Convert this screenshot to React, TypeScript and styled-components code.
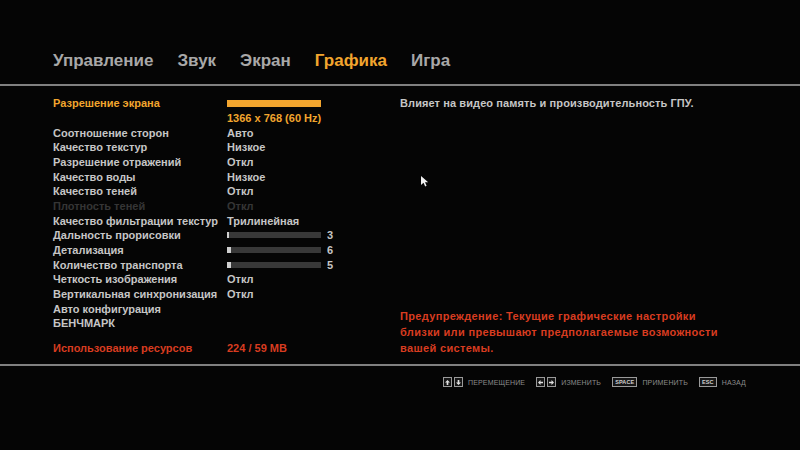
import styled, { createGlobalStyle } from "styled-components";

const GlobalStyle = createGlobalStyle`
  html, body {
    margin: 0;
    padding: 0;
    background: #050505;
  }
  body {
    font-family: "Liberation Sans", Arial, sans-serif;
  }
`;

const Screen = styled.div`
  position: relative;
  width: 800px;
  height: 450px;
  background: #050505;
  overflow: hidden;
  display: flex;
  flex-direction: column;
`;

const TabBar = styled.div`
  display: flex;
  gap: 24px;
  height: 84px;
  box-sizing: border-box;
  padding: 50px 0 0 53px;
`;

const Tab = styled.div<{ $active?: boolean }>`
  font-size: 17px;
  line-height: 22px;
  font-weight: bold;
  color: ${(p) => (p.$active ? "#f2a52e" : "#a8a8a8")};
`;

const Divider = styled.div`
  height: 2px;
  background: #808080;
`;

const Content = styled.div`
  display: grid;
  grid-template-columns: 347px 1fr;
  height: 278px;
  box-sizing: border-box;
  padding: 10px 0 8px 53px;
`;

const LeftColumn = styled.div`
  display: flex;
  flex-direction: column;
`;

const Row = styled.div<{ $tone?: "normal" | "active" | "disabled" | "alert" }>`
  display: grid;
  grid-template-columns: 174px 1fr;
  align-items: center;
  height: 14.67px;
  font-size: 11px;
  font-weight: bold;
  white-space: nowrap;
  color: ${(p) =>
    p.$tone === "active"
      ? "#f2a52e"
      : p.$tone === "disabled"
      ? "#353535"
      : p.$tone === "alert"
      ? "#d83c20"
      : "#c6c6c6"};
`;

const Spacer = styled.div`
  height: 10px;
`;

const ValueBar = styled.div`
  width: 94px;
  height: 7px;
  background: #f2a52e;
`;

const SliderCell = styled.div`
  display: flex;
  align-items: center;
  gap: 6px;
`;

const Track = styled.div`
  width: 94px;
  height: 6px;
  background: #383838;
`;

const Knob = styled.div`
  height: 100%;
  background: #cfcfcf;
`;

const RightColumn = styled.div`
  display: flex;
  flex-direction: column;
  justify-content: space-between;
`;

const Description = styled.div`
  font-size: 11px;
  font-weight: bold;
  line-height: 14.67px;
  letter-spacing: 0.1px;
  color: #c6c6c6;
`;

const Warning = styled.div`
  font-size: 11px;
  font-weight: bold;
  line-height: 16px;
  letter-spacing: 0.35px;
  color: #d83c20;
  white-space: nowrap;
`;

const Hints = styled.div`
  display: flex;
  justify-content: flex-end;
  align-items: center;
  gap: 11px;
  padding: 10px 54px 0 0;
  height: 12px;
`;

const Hint = styled.div`
  display: flex;
  align-items: center;
  gap: 5px;
  font-size: 7px;
  letter-spacing: 0.15px;
  color: #8c8c8c;
`;

const Keys = styled.div`
  display: flex;
  gap: 2px;
`;

const Key = styled.div`
  min-width: 7px;
  height: 8px;
  padding: 0 2px;
  border: 1px solid #9a9a9a;
  display: flex;
  align-items: center;
  justify-content: center;
  font-size: 5.5px;
  font-weight: bold;
  color: #d0d0d0;
  background: #161616;
`;

const ArrowKey = styled(Key)`
  padding: 0;
`;

const Cursor = styled.svg`
  position: absolute;
  left: 421px;
  top: 176px;
`;

type Setting =
  | { label: string; value?: string; tone?: "normal" | "disabled" }
  | { label: string; slider: number; level: number };

const settings: Setting[] = [
  { label: "Соотношение сторон", value: "Авто" },
  { label: "Качество текстур", value: "Низкое" },
  { label: "Разрешение отражений", value: "Откл" },
  { label: "Качество воды", value: "Низкое" },
  { label: "Качество теней", value: "Откл" },
  { label: "Плотность теней", value: "Откл", tone: "disabled" },
  { label: "Качество фильтрации текстур", value: "Трилинейная" },
  { label: "Дальность прорисовки", slider: 2, level: 3 },
  { label: "Детализация", slider: 4, level: 6 },
  { label: "Количество транспорта", slider: 4, level: 5 },
  { label: "Четкость изображения", value: "Откл" },
  { label: "Вертикальная синхронизация", value: "Откл" },
  { label: "Авто конфигурация" },
  { label: "БЕНЧМАРК" },
];

const Arrow = ({ dir }: { dir: "up" | "down" | "left" | "right" }) => {
  const rot = { up: 0, right: 90, down: 180, left: 270 }[dir];
  return (
    <svg width="5" height="5" viewBox="0 0 6 6" style={{ transform: `rotate(${rot}deg)` }}>
      <path d="M3 0 L6 3 H4 V6 H2 V3 H0 Z" fill="#e0e0e0" />
    </svg>
  );
};

export default function App() {
  return (
    <>
      <GlobalStyle />
      <Screen>
        <TabBar>
          <Tab>Управление</Tab>
          <Tab>Звук</Tab>
          <Tab>Экран</Tab>
          <Tab $active>Графика</Tab>
          <Tab>Игра</Tab>
        </TabBar>
        <Divider />
        <Content>
          <LeftColumn>
            <Row $tone="active">
              <span>Разрешение экрана</span>
              <ValueBar />
            </Row>
            <Row $tone="active">
              <span />
              <span>1366 x 768 (60 Hz)</span>
            </Row>
            {settings.map((s) => (
              <Row key={s.label} $tone={"tone" in s ? s.tone : "normal"}>
                <span>{s.label}</span>
                {"slider" in s ? (
                  <SliderCell>
                    <Track>
                      <Knob style={{ width: `${s.slider}px` }} />
                    </Track>
                    <span>{s.level}</span>
                  </SliderCell>
                ) : (
                  <span>{s.value}</span>
                )}
              </Row>
            ))}
            <Spacer />
            <Row $tone="alert">
              <span>Использование ресурсов</span>
              <span>224 / 59 MB</span>
            </Row>
          </LeftColumn>
          <RightColumn>
            <Description>
              Влияет на видео память и производительность ГПУ.
            </Description>
            <Warning>
              Предупреждение: Текущие графические настройки
              <br />
              близки или превышают предполагаемые возможности
              <br />
              вашей системы.
            </Warning>
          </RightColumn>
        </Content>
        <Divider />
        <Hints>
          <Hint>
            <Keys>
              <ArrowKey><Arrow dir="up" /></ArrowKey>
              <ArrowKey><Arrow dir="down" /></ArrowKey>
            </Keys>
            ПЕРЕМЕЩЕНИЕ
          </Hint>
          <Hint>
            <Keys>
              <ArrowKey><Arrow dir="left" /></ArrowKey>
              <ArrowKey><Arrow dir="right" /></ArrowKey>
            </Keys>
            ИЗМЕНИТЬ
          </Hint>
          <Hint>
            <Key>SPACE</Key>
            ПРИМЕНИТЬ
          </Hint>
          <Hint>
            <Key>ESC</Key>
            НАЗАД
          </Hint>
        </Hints>
        <Cursor width="8" height="11" viewBox="0 0 8 11">
          <path d="M0 0 L0 9 L2.5 6.8 L4.2 10.5 L5.6 9.8 L4 6.3 L7.2 6.3 Z" fill="#f0f0f0" />
        </Cursor>
      </Screen>
    </>
  );
}
